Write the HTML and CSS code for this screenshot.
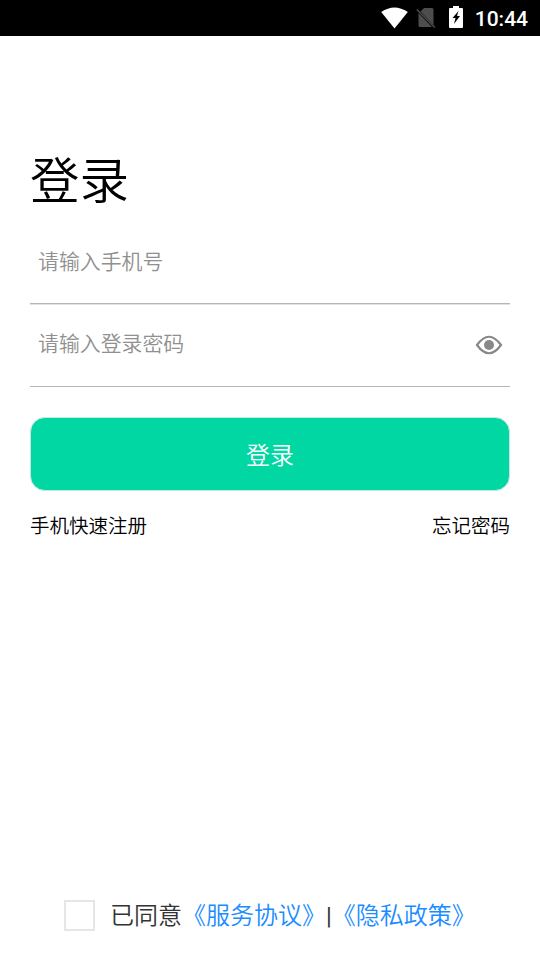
FILE: index.html
```html
<!DOCTYPE html>
<html lang="zh-CN">
<head>
<meta charset="utf-8">
<title>登录</title>
<link rel="stylesheet" href="styles.css">
</head>
<body>
<header class="status">
<svg class="wifi" width="28" height="22" viewBox="0 0 28 22"><path fill="#fff" d="M13.500 21.500 0.200 5Q13.500-4 26.800 5Z"/></svg>
<svg class="sim" width="20" height="22" viewBox="0 0 20 22"><path fill="#4d4d4d" d="M8 1h8q1.500 0 1.500 1.500v15.500L4.500 4.500zM2.500 6 16 20H4q-1.500 0-1.500-1.500z"/><path d="M.8 2.500l18 18" stroke="#4d4d4d" stroke-width="1.600"/></svg>
<svg class="battery" width="14" height="22" viewBox="0 0 14 22"><path fill="#fff" d="M4 0h6v2h3q1 0 1 1v18q0 1-1 1H1q-1 0-1-1V3q0-1 1-1h3z"/><path fill="#000" d="M9.500 5 8 10h3l-6 8 1.500-6H3.500z"/></svg>
<time>10:44</time>
</header>
<main>
<h1>登录</h1>
<div class="field phone">请输入手机号</div>
<div class="field pass"><span>请输入登录密码</span>
<svg class="eye" width="28" height="20" viewBox="0 0 28 20"><path d="M2 10Q14-6.500 26 10Q14 26.500 2 10Z" fill="none" stroke="#888" stroke-width="2.200"/><circle cx="14" cy="10" r="5" fill="#888"/></svg></div>
<button class="login">登录</button>
<nav><a>手机快速注册</a><a>忘记密码</a></nav>
</main>
<footer><i class="box"></i><span>已同意<a>《服务协议》</a><b>|</b><a>《隐私政策》</a></span></footer>
</body>
</html>
```
FILE: styles.css
```css
*{box-sizing:border-box}
body{margin:0;height:960px;background:#fff;color:#000;font-family:"Noto Sans CJK SC",sans-serif;font-weight:350;display:flex;flex-direction:column}
.status{height:36px;background:#000;color:#fff;display:flex;align-items:center;justify-content:flex-end;padding-right:12px}
.wifi{margin:-1px 0 0}
.sim{margin-left:7px}
.battery{margin:-2px 0 0 13px}
time{font:500 21px/36px Roboto,sans-serif;margin:1px 0 0 12px}
main{flex:1;padding:106px 30px 0}
h1{margin:0;font-size:49.5px;line-height:72px;font-weight:350}
.field{height:83px;border-bottom:1px solid #b5b5b5;padding:0 7px 0 8px;color:#909090;font-size:20.9px;line-height:32px}
.phone{height:90px;padding-top:30px;box-shadow:0 1px #e2e2e2}
.pass{display:flex;justify-content:space-between;padding-top:23px}
.pass span{margin-top:-1px}
.eye{margin-top:8px}
.login{display:block;width:480px;height:74px;margin:30px 0 0;padding:0;border:1px solid #c4e8df;border-radius:15px;background:#00d7a2;color:#fff;font:350 24px/70px "Noto Sans CJK SC",sans-serif}
nav{display:flex;justify-content:space-between;font-size:19.5px;line-height:30px;margin-top:19px}
footer{height:90px;display:flex;align-items:center;padding-left:64px;font-size:24px;color:#333}
footer span{margin-top:-4px}
.box{width:31px;height:31px;border:2px solid #e6e6e6;margin-right:15px}
footer a{color:#1a8cff}
footer b{font:400 23.500px Roboto,sans-serif}
```
